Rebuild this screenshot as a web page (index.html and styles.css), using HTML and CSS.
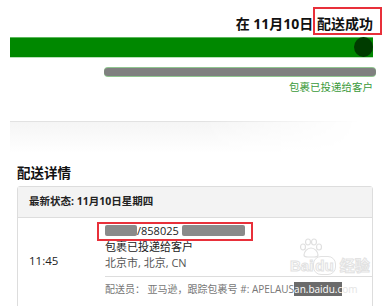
FILE: index.html
```html
<!DOCTYPE html>
<html lang="zh-CN">
<head>
    <meta charset="UTF-8">
    <meta name="viewport" content="width=device-width, initial-scale=1.0">
    <title>配送详情</title>
    <link rel="stylesheet" href="styles.css">
</head>
<body>
    <div class="summary">
        <div class="headline">在 11月10日 <span class="marked">配送成功</span></div>
        <div class="progress"><span class="knob"></span></div>
        <div class="blurred"></div>
        <div class="status-note">包裹已投递给客户</div>
    </div>

    <div class="fade"></div>

    <div class="details">
        <h2>配送详情</h2>
        <div class="card">
            <div class="card-head">最新状态: 11月10日星期四</div>
            <div class="event">
                <div class="time">11:45</div>
                <div class="info">
                    <div class="track-id"><span class="mask short"></span>/858025 <span class="mask long"></span></div>
                    <div>包裹已投递给客户</div>
                    <div class="place">北京市, 北京, CN</div>
                    <div class="courier">配送员： 亚马逊，跟踪包裹号 #: APELAUS<span class="wm-url">an.baidu.c</span><span class="wm-tail">om</span></div>
                </div>
                <div class="watermark">
                    <svg class="paw" width="26" height="20" viewBox="0 0 26 20">
                        <g fill="none" stroke="#e0e0e0" stroke-width="1.2">
                            <ellipse cx="5" cy="9" rx="2.5" ry="3"/>
                            <ellipse cx="10" cy="4" rx="2.5" ry="3"/>
                            <ellipse cx="16" cy="4" rx="2.5" ry="3"/>
                            <ellipse cx="21" cy="9" rx="2.5" ry="3"/>
                            <path d="M13 10c-4 0-7 4-7 7 0 2 2 2 4 2h6c2 0 4 0 4-2 0-3-3-7-7-7z"/>
                        </g>
                    </svg>
                    <div>Bai<span class="wm-du">du</span> 经验</div>
                </div>
            </div>
        </div>
    </div>
</body>
</html>
```

FILE: styles.css
```css
html, body {
    height: 306px;
    overflow: hidden;
}
body {
    margin: 0;
    padding: 0;
    background-color: #fff;
    font-family: "Open Sans", "Noto Sans CJK SC", sans-serif;
    color: #222;
}
.summary {
    padding: 0 12px 0 10px;
}
.headline {
    text-align: right;
    font-size: 14px;
    font-weight: bold;
    line-height: 20px;
    padding-top: 14px;
    color: #111;
}
.marked {
    position: relative;
}
.marked::after {
    content: "";
    position: absolute;
    left: -4px;
    right: -9px;
    top: -7px;
    bottom: -2px;
    border: 2px solid #e8303a;
}
.progress {
    position: relative;
    height: 19px;
    margin-top: 3px;
    background-color: #008800;
    border-top: 1px solid #5cb85c;
    border-bottom: 1px solid #b8e0b8;
}
.knob {
    position: absolute;
    right: 0;
    top: -1px;
    width: 19px;
    height: 20px;
    border-radius: 50%;
    background-color: #003c00;
}
.blurred {
    height: 8px;
    margin: 10px -3px 0 94px;
    border-radius: 4px;
    background-color: #808080;
    box-shadow: 0 -1px 0 #8fc68f, 0 1px 0 #8fc68f;
}
.status-note {
    text-align: right;
    font-size: 10.5px;
    line-height: 16px;
    margin-top: 3px;
    color: #3a9a3a;
}
.fade {
    height: 31px;
    margin: 26px 25px 0 10px;
    border-top: 1px solid #e2e2e2;
    background: linear-gradient(to bottom, #f5f5f5, #fff);
    -webkit-mask-image: linear-gradient(to right, #000 55%, transparent 100%);
    mask-image: linear-gradient(to right, #000 55%, transparent 100%);
}
.details {
    padding: 0 12px 0 17px;
}
.details h2 {
    margin: 10px 0 3px;
    font-size: 13.5px;
    font-weight: 600;
    line-height: 20px;
    color: #111;
}
.card {
    border: 1px solid #ddd;
    border-radius: 3px;
    height: 125px;
}
.card-head {
    height: 30px;
    line-height: 29px;
    padding-left: 11px;
    font-size: 10.5px;
    font-weight: bold;
    background-color: #f3f3f3;
    border-bottom: 1px solid #ddd;
}
.event {
    position: relative;
    display: flex;
    align-items: center;
    padding: 5px 0 0 11px;
    font-size: 11px;
}
.time {
    width: 76px;
    flex-shrink: 0;
    font-size: 11.5px;
}
.info {
    flex: 1;
    line-height: 16px;
    min-width: 0;
}
.track-id {
    position: relative;
    display: inline-block;
}
.track-id::after {
    content: "";
    position: absolute;
    left: -8px;
    right: -8px;
    top: -1px;
    bottom: -2px;
    border: 2px solid #e8303a;
}
.mask {
    display: inline-block;
    height: 11px;
    vertical-align: -1px;
    background-color: #8a8a8a;
    border-radius: 2px;
}
.mask.short {
    width: 32px;
}
.mask.long {
    width: 63px;
}
.place {
    color: #555;
}
.courier {
    margin-top: 5px;
    padding-top: 5px;
    border-top: 1px solid #ddd;
    font-size: 10px;
    line-height: 15px;
    color: #777;
    white-space: nowrap;
    overflow: hidden;
}
.wm-url {
    background-color: #6b6b6b;
    color: #fff;
}
.wm-tail {
    color: #e4e4e4;
}
.watermark {
    position: absolute;
    left: 272px;
    top: 20px;
    font-size: 15px;
    line-height: 16px;
    font-weight: bold;
    color: transparent;
    -webkit-text-stroke: 1px #e2e2e2;
    font-family: "Liberation Sans", "Noto Sans CJK SC", sans-serif;
    pointer-events: none;
}
.paw {
    display: block;
    margin-left: 8px;
}
.wm-du {
    border: 1px solid #e2e2e2;
    border-radius: 8px;
    padding: 0 1px;
}
```
